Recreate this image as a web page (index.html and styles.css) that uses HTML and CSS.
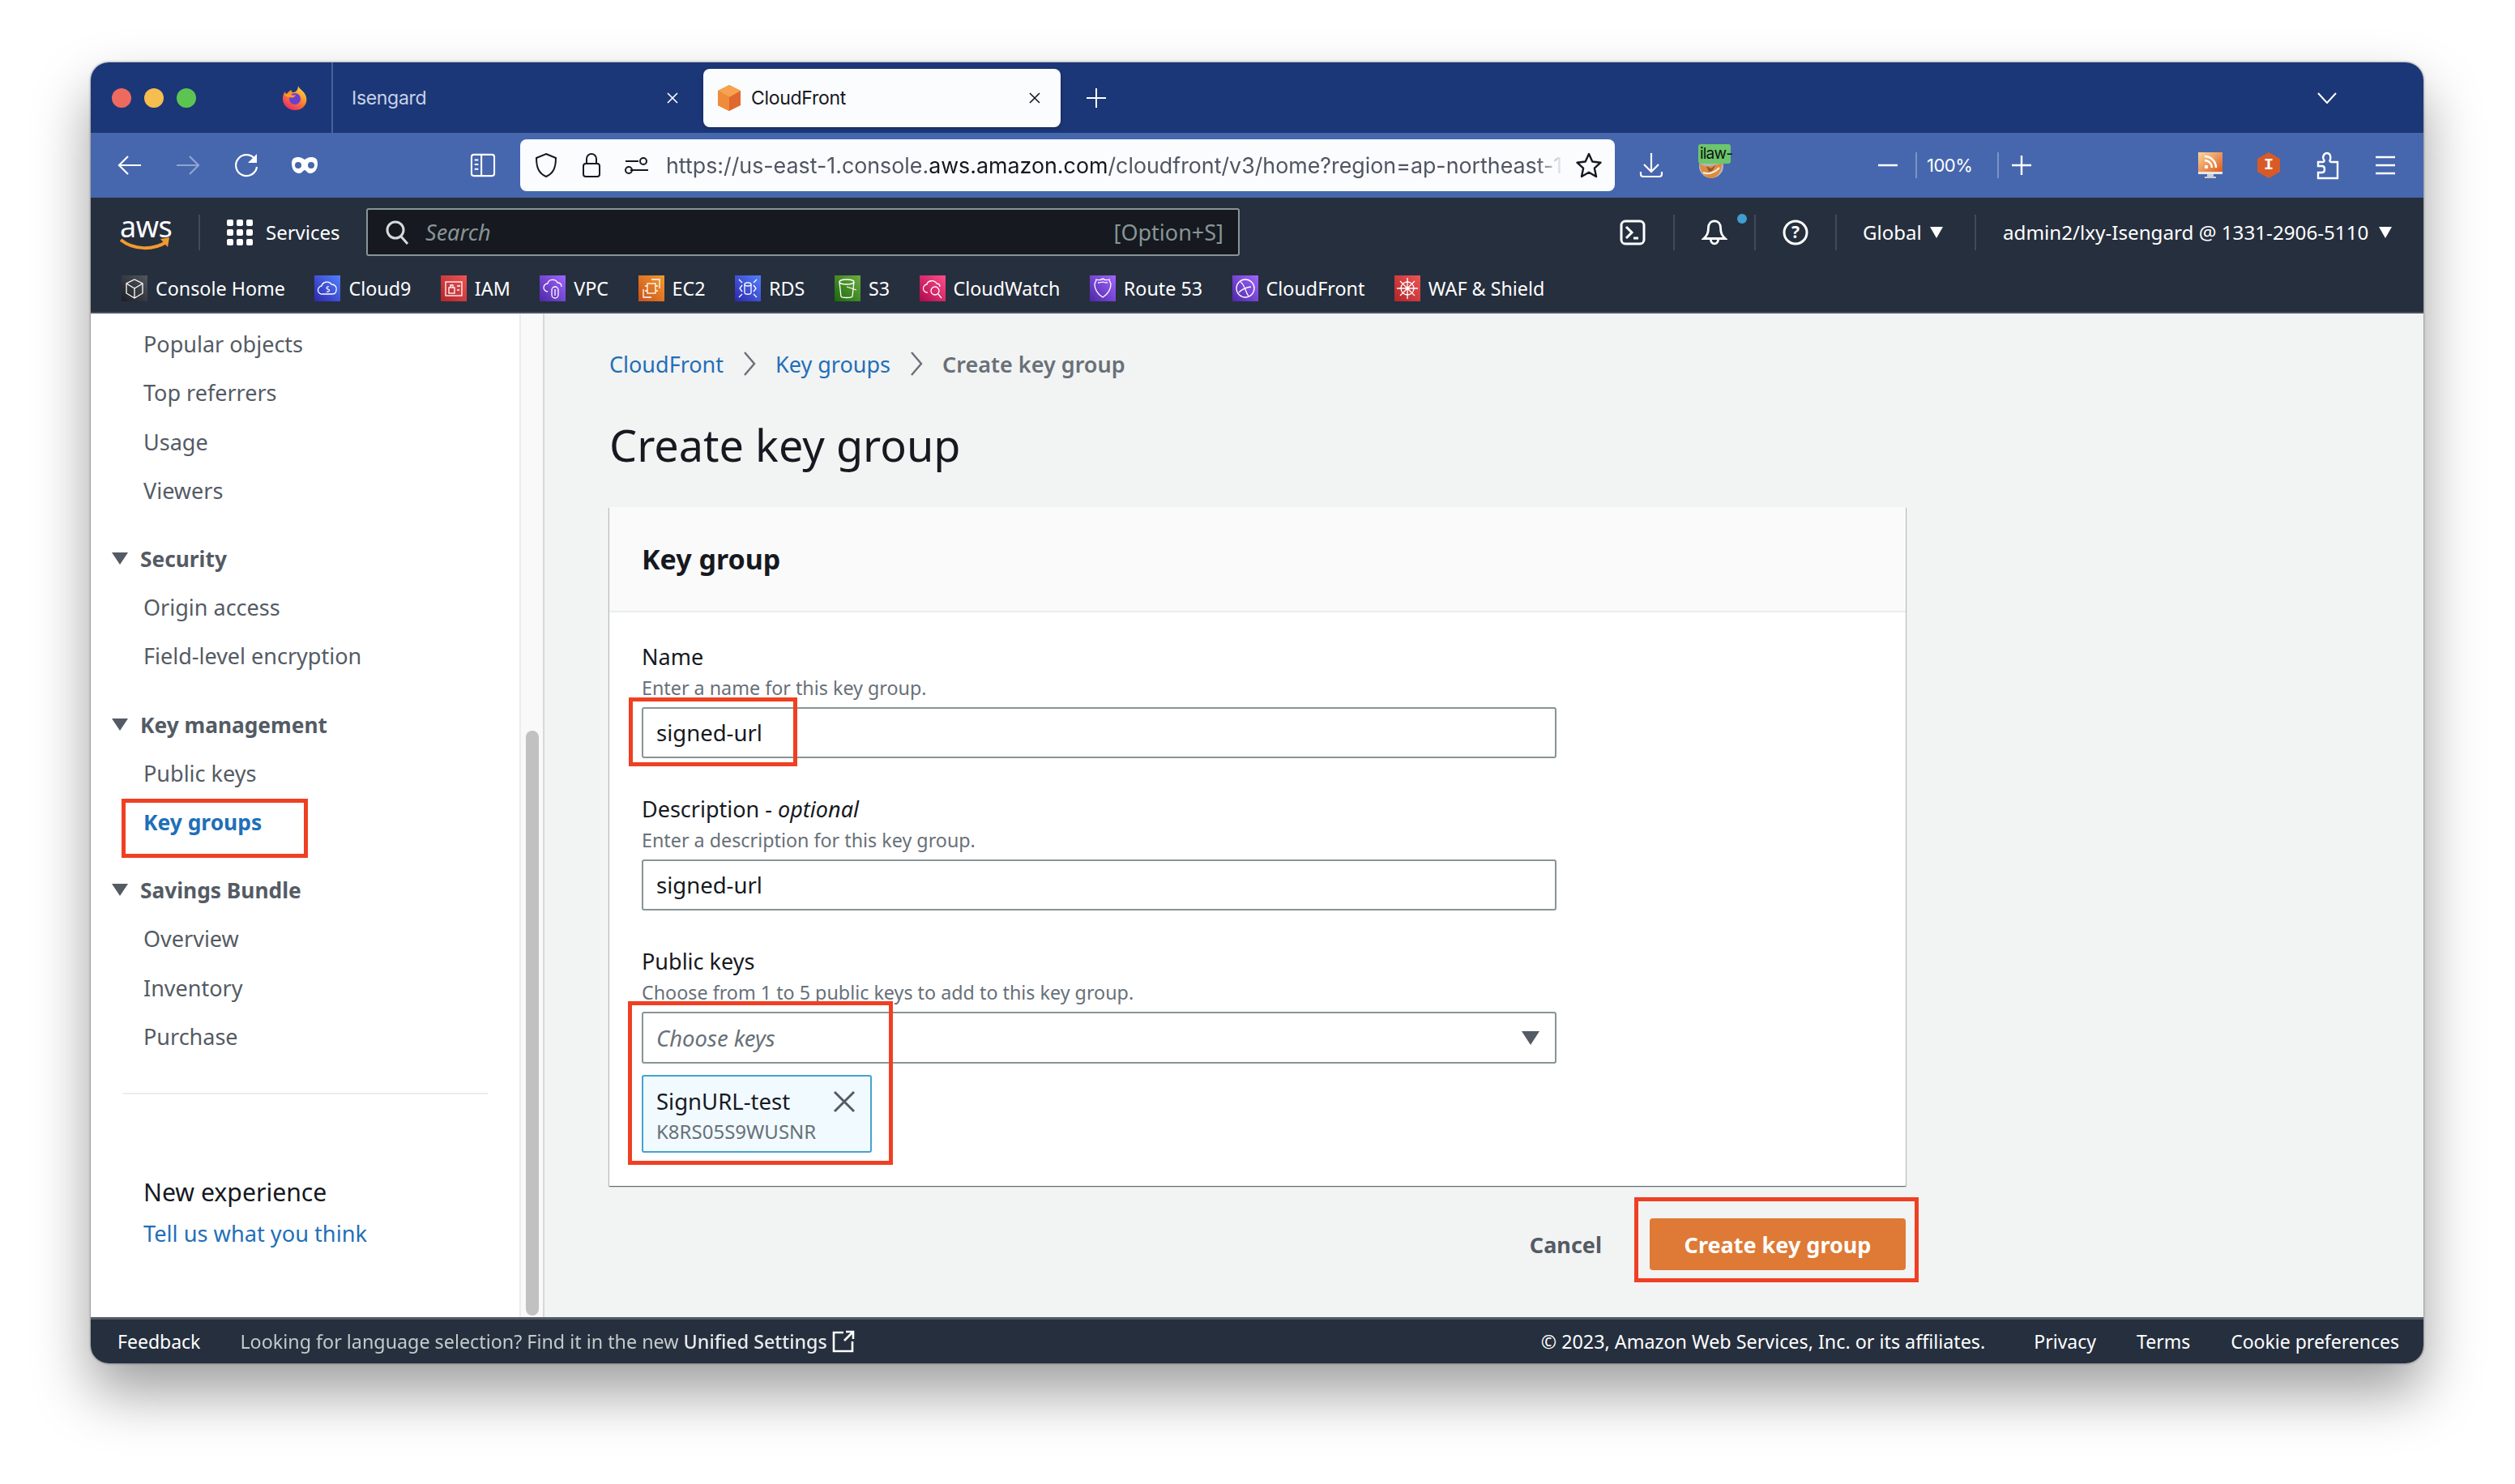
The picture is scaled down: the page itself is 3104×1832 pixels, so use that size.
FILE: index.html
```html
<!DOCTYPE html>
<html lang="en">
<head>
  <meta charset="UTF-8" />
  <title>CloudFront - Create key group</title>
  <link rel="stylesheet" href="styles.css">
</head>
<body>
<div class="window">
  <!-- browser tabs -->
  <div class="tabbar">
    <div class="lights"><i class="red"></i><i class="yellow"></i><i class="green"></i></div>
    <svg class="fx" viewBox="0 0 32 32">
      <defs><linearGradient id="fxg" x1="0.8" y1="0" x2="0.2" y2="1"><stop offset="0" stop-color="#ffe14d"/><stop offset=".45" stop-color="#ff8a2b"/><stop offset="1" stop-color="#e5236b"/></linearGradient></defs>
      <path d="M20 1c1 3 3 4 6 7 4 4 5 9 4 13-2 7-8 10-14 10C8 31 1 25 1 17c0-4 1-7 3-9 0 2 1 3 2 3 1-2 3-4 6-5-1 2 0 3 2 3 3 0 6-3 6-8z" fill="url(#fxg)"/>
      <circle cx="16" cy="17" r="7" fill="#6a3fd0"/>
      <path d="M3 12c3-2 6-2 8 0 2 1 4 1 6 0-1 3-4 4-7 3-2 0-4 0-7-3z" fill="#ff9c2b"/>
    </svg>
    <div class="tab">
      <span class="tab-title">Isengard</span>
      <svg class="tab-x" viewBox="0 0 16 16"><path d="M2 2l12 12M14 2L2 14"/></svg>
    </div>
    <div class="tab active">
      <svg class="favicon" viewBox="0 0 32 32"><path d="M16 0l14 7v18l-14 7-14-7V7z" fill="#e0672f"/><path d="M16 0l14 7-14 8L2 7z" fill="#f6a24e"/><path d="M2 7l14 8v17L2 25z" fill="#f08b3c"/></svg>
      <span class="tab-title">CloudFront</span>
      <svg class="tab-x" viewBox="0 0 16 16"><path d="M2 2l12 12M14 2L2 14"/></svg>
    </div>
    <svg class="newtab" viewBox="0 0 24 24"><path d="M12 0v24M0 12h24"/></svg>
    <svg class="tablist" viewBox="0 0 24 14"><path d="M1 1l11 12L23 1"/></svg>
  </div>

  <!-- browser toolbar -->
  <div class="toolbar">
    <button class="tb first"><svg viewBox="0 0 32 32"><path d="M30 16H3M14 5L3 16l11 11"/></svg></button>
    <button class="tb dim"><svg viewBox="0 0 32 32"><path d="M2 16h27M18 5l11 11-11 11"/></svg></button>
    <button class="tb"><svg viewBox="0 0 32 32"><path d="M27 9a13 13 0 1 0 2 9"/><path class="fill" d="M29 2v11H18z"/></svg></button>
    <button class="tb mask"><svg viewBox="0 0 34 22"><path class="fill" fill-rule="evenodd" d="M9 1c3 0 5 1 8 3 3-2 5-3 8-3 5 0 8 2 8 8 0 7-4 12-9 12-4 0-5-4-7-4s-3 4-7 4c-5 0-9-5-9-12C1 3 4 1 9 1zm0 6a4 4 0 1 0 0 8 4 4 0 0 0 0-8zm16 0a4 4 0 1 0 0 8 4 4 0 0 0 0-8z"/></svg></button>
    <button class="tb panel"><svg viewBox="0 0 32 32"><rect x="1" y="2" width="30" height="28" rx="3"/><path d="M14 2v28M5 9h5M5 15h5M5 21h5"/></svg></button>
    <div class="urlbar">
      <svg class="ub-icon" viewBox="0 0 32 32"><path d="M16 2l12 5c0 12-3 19-12 23C7 26 4 19 4 7z"/></svg>
      <svg class="ub-icon" viewBox="0 0 32 32"><rect x="6" y="14" width="20" height="16" rx="3"/><path d="M10 14V8a6 6 0 0 1 12 0v6"/></svg>
      <svg class="ub-icon" viewBox="0 0 32 32"><path d="M2 11h16M8 22h22"/><circle cx="24" cy="11" r="4"/><circle cx="6" cy="22" r="4"/></svg>
      <div class="url"><span>https://us-east-1.console.</span><b>aws.amazon.com</b><span>/cloudfront/v3/home?region=ap-northeast-1</span></div>
      <svg class="ub-star" viewBox="0 0 32 32"><path d="M16 2l4.300 9.500 10.200 1.200-7.600 7 2.100 10.300L16 24.800 7 30l2.100-10.300-7.600-7 10.200-1.200z"/></svg>
    </div>
    <button class="tb dl"><svg viewBox="0 0 32 32"><path d="M16 1v22M7 15l9 9 9-9M3 24v3a3 3 0 0 0 3 3h20a3 3 0 0 0 3-3v-3"/></svg></button>
    <div class="ilaw">
      <svg class="ilaw-fox" viewBox="0 0 30 30"><circle cx="15" cy="15" r="15" fill="#b5b5b5"/><path d="M1 12c4 3 9 4 14 3s10-2 13-4c1 9-6 19-13 19S1 22 1 12z" fill="#e08a3c"/><path d="M9 15l6 3 6-5-5 8-4 1z" fill="#8a5a2c"/><path d="M5 23c7 3 14 0 20-6" stroke="#eee" stroke-width="2" fill="none"/></svg>
      <span class="ilaw-tag">ilaw-</span>
    </div>
    <div class="zoomctl">
      <svg class="zm zm-minus" viewBox="0 0 24 24"><path d="M0 12h24"/></svg>
      <span class="zm-sep"></span>
      <span class="zm-val">100%</span>
      <span class="zm-sep"></span>
      <svg class="zm zm-plus" viewBox="0 0 24 24"><path d="M12 0v24M0 12h24"/></svg>
    </div>
    <svg class="rss" viewBox="0 0 32 32"><defs><linearGradient id="rssg" x1="0" y1="0" x2="1" y2="1"><stop offset="0" stop-color="#fbd79c"/><stop offset="1" stop-color="#dd5a1e"/></linearGradient></defs><rect x="1" y="0" width="30" height="24" fill="url(#rssg)"/><path d="M1 24h30v3H1z" fill="#e6e6e6"/><path d="M12 27h8v3h3v2H9v-2h3z" fill="#cfcfcf"/><circle cx="11" cy="18" r="2.200" fill="#fff"/><path d="M9 10a9 9 0 0 1 9 9M9 5a14 14 0 0 1 14 14" fill="none" stroke="#fff" stroke-width="2.500"/></svg>
    <div class="hex"><span>I</span></div>
    <svg class="tool puzzle" viewBox="0 0 28 36"><path d="M2 14h6c2 0 2-2 1-3-2-3 0-8 4-8s5 5 4 8c-1 1-1 3 1 3h8v20H2v-7h5c4 0 4-8 0-8H2z"/></svg>
    <svg class="tool burger" viewBox="0 0 26 24"><path d="M1 2h24M1 12h24M1 22h24"/></svg>
  </div>

  <!-- aws console nav -->
  <nav class="awsnav">
    <div class="nav-top">
      <div class="aws-logo">
        <span>aws</span>
        <svg viewBox="0 0 62 20"><path d="M1 4c16 13 40 13 56 3" fill="none" stroke="#f29a2e" stroke-width="4"/><path d="M50 3l11-2-2 12z" fill="#f29a2e"/></svg>
      </div>
      <span class="nav-sep logo-sep"></span>
      <svg class="grid-icon" viewBox="0 0 32 32"><g fill="#fff"><rect x="0" y="0" width="8" height="8" rx="2"/><rect x="12" y="0" width="8" height="8" rx="2"/><rect x="24" y="0" width="8" height="8" rx="2"/><rect x="0" y="12" width="8" height="8" rx="2"/><rect x="12" y="12" width="8" height="8" rx="2"/><rect x="24" y="12" width="8" height="8" rx="2"/><rect x="0" y="24" width="8" height="8" rx="2"/><rect x="12" y="24" width="8" height="8" rx="2"/><rect x="24" y="24" width="8" height="8" rx="2"/></g></svg>
      <span class="services">Services</span>
      <div class="searchbox">
        <svg viewBox="0 0 30 32"><circle cx="13" cy="13" r="10"/><path d="M20 21l8 9"/></svg>
        <span class="search-ph">Search</span>
        <span class="search-key">[Option+S]</span>
      </div>
      <div class="nav-slot shell">
        <svg viewBox="0 0 32 32"><rect x="2" y="2" width="28" height="28" rx="5"/><path d="M8 9l7 7-7 7M17 23h6"/></svg>
      </div>
      <div class="nav-slot bell">
        <svg viewBox="0 0 32 34"><path d="M16 2c-5 0-8 4-8 9 0 7-2 10-6 14h28c-4-4-6-7-6-14 0-5-3-9-8-9zM11 25c0 9 10 9 10 0"/></svg>
        <i class="bell-dot"></i>
      </div>
      <div class="nav-slot help">
        <svg viewBox="0 0 32 32"><circle cx="16" cy="16" r="14"/><text x="16" y="23" text-anchor="middle">?</text></svg>
      </div>
      <div class="nav-slot region"><span>Global</span><i class="caret"></i></div>
      <div class="nav-slot account"><span>admin2/lxy-Isengard @ 1331-2906-5110</span><i class="caret"></i></div>
    </div>
    <div class="nav-links">
      <a class="bm"><span class="svc c-home"><svg viewBox="0 0 32 32"><path d="M16 5l10 5v12l-10 6-10-6V10zM6 10l10 6 10-6M16 16v12"/></svg></span>Console Home</a>
      <a class="bm"><span class="svc c-blue"><svg viewBox="0 0 32 32"><path d="M10 23a5 5 0 0 1-1-10c1-5 9-7 12-2 4 0 7 3 6 7 0 3-2 5-5 5z"/><path d="M18 14c-3-1-4 3-1 3 3 1 1 4-2 3"/></svg></span>Cloud9</a>
      <a class="bm"><span class="svc c-red"><svg viewBox="0 0 32 32"><rect x="6" y="8" width="20" height="17"/><rect x="10" y="15" width="7" height="7"/><path d="M12 15v-3h3v3M20 13h4M20 18h3"/></svg></span>IAM</a>
      <a class="bm"><span class="svc c-purple"><svg viewBox="0 0 32 32"><path d="M10 20a5 5 0 0 1 0-10c1-6 10-6 12-1 3 0 5 2 5 5"/><rect x="15" y="14" width="8" height="14" rx="4"/><path d="M19 17v8"/></svg></span>VPC</a>
      <a class="bm"><span class="svc c-orange"><svg viewBox="0 0 32 32"><path d="M16 5h10v11M6 17v10h10"/><rect x="11" y="10" width="10" height="12"/><path d="M8 13h3M8 19h3M21 13h3M21 19h3"/></svg></span>EC2</a>
      <a class="bm"><span class="svc c-blue"><svg viewBox="0 0 32 32"><ellipse cx="16" cy="11" rx="4" ry="2"/><path d="M12 11v10c0 3 8 3 8 0V11M9 12l-3 4 3 4M23 12l3 4-3 4M5 5l4 4M27 5l-4 4M5 27l4-4M27 27l-4-4"/></svg></span>RDS</a>
      <a class="bm"><span class="svc c-green"><svg viewBox="0 0 32 32"><ellipse cx="15" cy="8" rx="9" ry="3"/><path d="M6 8l2 18c1 2 13 2 14 0l2-18M15 14l12 4"/></svg></span>S3</a>
      <a class="bm"><span class="svc c-pink"><svg viewBox="0 0 32 32"><path d="M10 21a5 5 0 0 1-1-10c1-5 9-6 12-1 2 0 4 1 4 4"/><circle cx="19" cy="19" r="5"/><path d="M23 23l4 5"/></svg></span>CloudWatch</a>
      <a class="bm"><span class="svc c-purple"><svg viewBox="0 0 32 32"><path d="M16 4c2 2 5 2 8 1 0 3 2 4 2 6 0 5-3 12-10 16C9 23 6 16 6 11c0-2 2-3 2-6 3 1 6 1 8-1z"/><path d="M10 9c2 0 4 0 6-1 2 1 4 1 6 1"/></svg></span>Route 53</a>
      <a class="bm"><span class="svc c-purple"><svg viewBox="0 0 32 32"><circle cx="16" cy="16" r="11"/><path d="M10 8c5 3 6 12 10 18M8 21c3-3 8-6 15-7"/></svg></span>CloudFront</a>
      <a class="bm"><span class="svc c-red"><svg viewBox="0 0 32 32"><circle cx="16" cy="16" r="8"/><path d="M16 3v26M3 16h26M7 7l18 18M25 7L7 25"/></svg></span>WAF &amp; Shield</a>
    </div>
  </nav>

  <div class="main">
    <aside class="sidebar">
      <a class="side-item">Popular objects</a>
      <a class="side-item">Top referrers</a>
      <a class="side-item">Usage</a>
      <a class="side-item">Viewers</a>
      <div class="side-head"><i class="side-caret"></i>Security</div>
      <a class="side-item">Origin access</a>
      <a class="side-item">Field-level encryption</a>
      <div class="side-head"><i class="side-caret"></i>Key management</div>
      <a class="side-item">Public keys</a>
      <a class="side-item current">Key groups</a>
      <div class="side-head"><i class="side-caret"></i>Savings Bundle</div>
      <a class="side-item">Overview</a>
      <a class="side-item">Inventory</a>
      <a class="side-item">Purchase</a>
      <hr class="side-rule" />
      <div class="side-new">New experience</div>
      <a class="side-tell">Tell us what you think</a>
    </aside>
    <div class="side-scroll"><div class="side-thumb"></div></div>

    <main class="content">
      <div class="crumbs">
        <a>CloudFront</a>
        <svg viewBox="0 0 16 32"><path d="M2 2l12 14L2 30"/></svg>
        <a>Key groups</a>
        <svg viewBox="0 0 16 32"><path d="M2 2l12 14L2 30"/></svg>
        <span>Create key group</span>
      </div>
      <h1>Create key group</h1>
      <section class="card">
        <h2 class="card-head">Key group</h2>
        <div class="card-body">
          <div class="field">
            <div class="f-label">Name</div>
            <div class="f-hint">Enter a name for this key group.</div>
            <div class="f-input">signed-url</div>
          </div>
          <div class="field">
            <div class="f-label">Description - <em>optional</em></div>
            <div class="f-hint">Enter a description for this key group.</div>
            <div class="f-input">signed-url</div>
          </div>
          <div class="field last">
            <div class="f-label">Public keys</div>
            <div class="f-hint">Choose from 1 to 5 public keys to add to this key group.</div>
            <div class="f-input f-select"><em>Choose keys</em><i class="sel-caret"></i></div>
            <div class="token">
              <div class="tok-name">SignURL-test</div>
              <div class="tok-id">K8RS05S9WUSNR</div>
              <svg viewBox="0 0 28 28"><path d="M2 2l24 24M26 2L2 26"/></svg>
            </div>
          </div>
        </div>
      </section>
      <div class="actions">
        <a class="cancel">Cancel</a>
        <button class="primary">Create key group</button>
      </div>
    </main>
  </div>

  <footer class="footer">
    <a class="fb">Feedback</a>
    <span class="lang">Looking for language selection? Find it in the new <b>Unified Settings</b></span>
    <svg class="ext" viewBox="0 0 28 28"><path d="M14 3H2v23h23V14M15 13L26 2M17 2h9v9"/></svg>
    <span class="copy">© 2023, Amazon Web Services, Inc. or its affiliates.</span>
    <a class="flink privacy">Privacy</a>
    <a class="flink">Terms</a>
    <a class="flink">Cookie preferences</a>
  </footer>

  <!-- red annotation boxes -->
  <div class="mark m-side"></div>
  <div class="mark m-name"></div>
  <div class="mark m-keys"></div>
  <div class="mark m-btn"></div>
</div>
</body>
</html>
```

FILE: styles.css
```css
* { box-sizing: border-box; }
html, body { margin: 0; height: 100%; }
body {
  background: #fff;
  padding: 77px 112px 0 112px;
  overflow: hidden;
  font-family: "Noto Sans", sans-serif;
  color: #16191f;
}
button { border: 0; background: none; padding: 0; font: inherit; }
svg { display: block; }

.window {
  position: relative;
  width: 2879px;
  height: 1606px;
  display: flex;
  flex-direction: column;
  border-radius: 22px;
  overflow: hidden;
}
/* shadow lives on a pseudo so the overflow clip keeps corners */
body::before {
  content: "";
  position: absolute;
  left: 112px;
  top: 77px;
  width: 2879px;
  height: 1606px;
  border-radius: 22px;
  box-shadow: 0 36px 70px rgba(0,0,0,.38), 0 0 3px rgba(0,0,0,.55);
}

/* tabs */
.tabbar {
  height: 87px;
  flex: none;
  background: #1c3778;
  display: flex;
  align-items: center;
  font-family: Inter, sans-serif;
}
.lights { display: flex; gap: 16px; margin-left: 26px; }
.lights i { width: 24px; height: 24px; border-radius: 50%; display: block; }
.lights .red { background: #ef6a5e; }
.lights .yellow { background: #f6bd4f; }
.lights .green { background: #5cc552; }
.fx { width: 32px; height: 32px; margin-left: 106px; }
.tab {
  height: 87px;
  width: 459px;
  margin-left: 29px;
  border-left: 2px solid #4a6199;
  padding-left: 23px;
  display: flex;
  align-items: center;
  color: #c9d2e6;
}
.tab-title { font-size: 23px; flex: 1; letter-spacing: -.3px; }
.tab-x { width: 16px; height: 16px; fill: none; stroke: #fff; stroke-width: 1.6; margin-right: 30px; }
.tab.active {
  height: 72px;
  width: 441px;
  margin-left: 0;
  border-left: 0;
  background: #fbfcfe;
  color: #16191f;
  border-radius: 8px;
  padding-left: 16px;
  box-shadow: 0 1px 4px rgba(0,0,0,.3);
}
.tab.active .tab-x { stroke: #16191f; margin-right: 24px; }
.favicon { width: 32px; height: 32px; margin-right: 11px; }
.newtab { width: 24px; height: 24px; margin-left: 32px; fill: none; stroke: #fff; stroke-width: 2; }
.tablist { width: 24px; height: 14px; margin-left: auto; margin-right: 107px; fill: none; stroke: #fff; stroke-width: 2; }

/* toolbar */
.toolbar {
  height: 80px;
  flex: none;
  background: #4667ae;
  display: flex;
  align-items: center;
  font-family: Inter, sans-serif;
  color: #fff;
}
.tb { width: 72px; height: 48px; display: flex; align-items: center; justify-content: center; flex: none; }
.tb.first { margin-left: 12px; }
.tb svg { width: 32px; height: 32px; fill: none; stroke: #fff; stroke-width: 2.200; }
.tb .fill { fill: #fff; stroke: none; }
.tb.dim svg { opacity: .4; }
.tb.mask svg { width: 34px; height: 22px; stroke: none; }
.tb.panel { margin-left: 148px; }
.tb.panel svg { width: 32px; height: 30px; }
.urlbar {
  width: 1351px;
  height: 64px;
  margin-left: 10px;
  background: #fbfcfe;
  border-radius: 8px;
  display: flex;
  align-items: center;
  padding-left: 16px;
  flex: none;
}
.ub-icon { width: 32px; height: 32px; margin-right: 24px; fill: none; stroke: #16191f; stroke-width: 2; }
.url {
  font-size: 26.8px;
  color: #4f5663;
  white-space: nowrap;
  width: 1108px;
  margin-left: -4px;
  -webkit-mask-image: linear-gradient(to right, #000 97%, transparent);
  mask-image: linear-gradient(to right, #000 97%, transparent);
}
.url b { font-weight: 400; color: #14171c; }
.ub-star { width: 32px; height: 32px; margin-left: 15px; fill: none; stroke: #16191f; stroke-width: 2.400; stroke-linejoin: round; }
.tb.dl { margin-left: 13px; width: 64px; }
.ilaw { position: relative; width: 40px; height: 60px; margin-left: 26px; margin-top: -8px; }
.ilaw-fox { position: absolute; left: 1px; top: 20px; width: 30px; height: 30px; }
.ilaw-tag {
  position: absolute;
  left: 0;
  top: 8px;
  width: 40px;
  height: 24px;
  background: #6cc66b;
  color: #111;
  font-size: 19px;
  letter-spacing: -.8px;
  line-height: 24px;
  padding-left: 2px;
  border-radius: 3px;
}
.zoomctl { display: flex; align-items: center; margin-left: 182px; }
.zm { width: 24px; height: 24px; fill: none; stroke: #fff; stroke-width: 2.400; }
.zm-minus { margin-right: 22px; }
.zm-plus { margin-left: 16px; }
.zm-sep { width: 2px; height: 32px; background: #7b94c7; }
.zm-val { font-size: 22px; width: 59px; margin: 0 28px 0 12px; letter-spacing: -.5px; }
.rss { width: 32px; height: 32px; margin-left: 205px; }
.hex {
  width: 28px;
  height: 32px;
  margin-left: 42px;
  background: #d85a26;
  clip-path: polygon(50% 0, 100% 25%, 100% 75%, 50% 100%, 0 75%, 0 25%);
  color: #fff;
  font-family: "Liberation Mono", monospace;
  font-weight: 700;
  font-size: 20px;
  line-height: 32px;
  text-align: center;
}
.tool { fill: none; stroke: #fff; stroke-width: 2.400; }
.puzzle { width: 28px; height: 36px; margin-left: 45px; }
.burger { width: 26px; height: 24px; margin-left: 44px; }

/* aws nav */
.awsnav {
  height: 143px;
  flex: none;
  background: #262f3e;
  border-bottom: 2px solid #4b5360;
  color: #fff;
  padding-top: 13px;
}
.nav-top { display: flex; align-items: center; height: 59px; }
.aws-logo { width: 62px; margin-left: 36px; position: relative; height: 44px; }
.aws-logo span { display: block; font-size: 36px; line-height: 30px; text-align: center; letter-spacing: -.5px; }
.aws-logo svg { width: 62px; height: 20px; margin-top: -3px; }
.nav-sep { width: 2px; height: 44px; background: #414a58; }
.logo-sep { margin-left: 35px; }
.grid-icon { width: 32px; height: 32px; margin-left: 33px; }
.services { font-size: 24px; margin-left: 16px; width: 90px; white-space: nowrap; }
.searchbox {
  width: 1078px;
  height: 59px;
  margin-left: 34px;
  background: #16191f;
  border: 2px solid #879596;
  border-radius: 3px;
  display: flex;
  align-items: center;
  padding: 0 18px 0 21px;
  color: #879596;
  font-size: 27px;
}
.searchbox svg { width: 30px; height: 32px; fill: none; stroke: #d5dbdb; stroke-width: 3; }
.search-ph { font-style: italic; margin-left: 20px; flex: 1; }
.nav-slot {
  height: 44px;
  display: flex;
  align-items: center;
  justify-content: center;
  width: 100px;
  position: relative;
  flex: none;
}
.nav-slot + .nav-slot { border-left: 2px solid #414a58; }
.nav-slot svg { width: 32px; height: 32px; fill: none; stroke: #fff; stroke-width: 3; }
.shell { margin-left: 435px; }
.help text { fill: #fff; stroke: none; font-size: 21px; font-weight: 700; font-family: "Noto Sans", sans-serif; }
.bell-dot { position: absolute; right: 9px; top: -1px; width: 12px; height: 12px; background: #3f9fd0; border-radius: 50%; }
.region, .account { justify-content: flex-start; padding-left: 33px; font-size: 24.200px; white-space: nowrap; }
.region { width: 172px; padding-left: 32px; font-size: 24px; }
.region .caret { margin-left: 10px; }
.account { width: 520px; }
.caret { width: 0; height: 0; border-left: 8px solid transparent; border-right: 8px solid transparent; border-top: 14px solid #fff; margin-left: 13px; }

.nav-links { display: flex; align-items: center; margin-top: 24px; padding-left: 38px; gap: 36.500px; }
.bm { display: flex; align-items: center; gap: 10px; font-size: 23.300px; height: 32px; white-space: nowrap; }
.svc { width: 32px; height: 32px; display: block; flex: none; }
.svc svg { width: 32px; height: 32px; fill: none; stroke: #fff; stroke-width: 1.300; }
.c-home { background: linear-gradient(45deg, #1c1f24, #52575e); }
.c-blue { background: linear-gradient(45deg, #2e27ad, #527fff); }
.c-red { background: linear-gradient(45deg, #b0252a, #ee5455); }
.c-purple { background: linear-gradient(45deg, #4d27a8, #a166ff); }
.c-orange { background: linear-gradient(45deg, #c8511b, #f59a2e); }
.c-green { background: linear-gradient(45deg, #1b660f, #6cae3e); }
.c-pink { background: linear-gradient(45deg, #b0084d, #ff4f8b); }

/* page body */
.main { flex: 1; display: flex; min-height: 0; }
.sidebar {
  width: 531px;
  flex: none;
  background: #fff;
  border-right: 2px solid #eaeded;
  padding: 8px 0 0 65px;
  overflow: hidden;
  color: #545b64;
  font-size: 27px;
}
.side-item { display: block; height: 60.3px; line-height: 60px; }
.side-item.current { color: #1f6fb8; font-weight: 700; font-size: 26.400px; }
.side-head {
  height: 60px;
  line-height: 60px;
  font-weight: 700;
  font-size: 26.300px;
  margin: 24px 0 0 -4px;
  position: relative;
}
.side-caret {
  position: absolute;
  left: -35px;
  top: 22px;
  width: 0;
  height: 0;
  border-left: 10px solid transparent;
  border-right: 10px solid transparent;
  border-top: 15px solid #545b64;
}
.side-rule { border: 0; height: 2px; background: #eaeded; margin: 39px 0 0 -25px; width: 450px; }
.side-new { margin-top: 101px; font-size: 30.200px; line-height: 40px; color: #16191f; }
.side-tell { display: block; margin-top: 11px; line-height: 40px; color: #1f6fb8; font-size: 27.200px; }
.side-scroll { width: 29px; flex: none; background: #f9f9f9; border-right: 2px solid #d5dbdb; position: relative; }
.side-thumb { position: absolute; left: 6px; top: 515px; bottom: 2px; width: 16px; background: #c1c1c1; border-radius: 8px; }

.content { flex: 1; background: #f2f3f3; padding: 42px 0 0 80px; }
.crumbs { display: flex; align-items: center; height: 40px; font-size: 27px; color: #687078; }
.crumbs a { color: #1f6fb8; }
.crumbs span { font-weight: 600; }
.crumbs svg { width: 16px; height: 32px; margin: 0 24px; fill: none; stroke: #687078; stroke-width: 2.400; }
h1 { margin: 44px 0 0 0; font-size: 54px; font-weight: 400; line-height: 72px; color: #16191f; }

.card {
  width: 1600px;
  margin-top: 41px;
  background: #fff;
  box-shadow: 0 1px 1px rgba(0,28,36,.4), 1px 1px 1px rgba(0,28,36,.2), -1px 1px 1px rgba(0,28,36,.2);
}
.card-head {
  margin: 0;
  height: 130px;
  background: #fafafa;
  border-bottom: 2px solid #eaeded;
  padding-left: 40px;
  font-size: 34px;
  font-weight: 700;
  line-height: 128px;
}
.card-body { padding: 37px 0 41px 40px; }
.field { margin-bottom: 45px; }
.field.last { margin-bottom: 0; }
.f-label { font-size: 27px; line-height: 36px; }
.f-hint { font-size: 23.300px; line-height: 30px; margin-top: 5px; color: #687078; }
.f-input {
  width: 1129px;
  height: 63px;
  margin-top: 9px;
  border: 2px solid #879596;
  border-radius: 3px;
  background: #fff;
  padding-left: 16px;
  font-size: 27.500px;
  line-height: 59px;
}
.f-select { height: 64px; margin-top: 9px; display: flex; align-items: center; justify-content: space-between; padding-right: 19px; color: #687078; }
.sel-caret { width: 0; height: 0; border-left: 11px solid transparent; border-right: 11px solid transparent; border-top: 17px solid #545b64; }
.token {
  position: relative;
  width: 284px;
  height: 96px;
  margin-top: 14px;
  background: #f1faff;
  border: 2px solid #44a3cc;
  border-radius: 3px;
  padding: 13px 0 0 16px;
}
.tok-name { font-size: 27.500px; line-height: 36px; }
.tok-id { font-size: 24px; line-height: 32px; color: #687078; margin-top: 3px; }
.token svg { position: absolute; right: 18px; top: 17px; width: 28px; height: 28px; fill: none; stroke: #545b64; stroke-width: 3; }

.actions { width: 1600px; display: flex; justify-content: flex-end; align-items: center; margin-top: 40px; gap: 59px; }
.cancel { font-size: 27px; font-weight: 700; color: #545b64; }
.primary {
  width: 316px;
  height: 64px;
  background: #de7a35;
  border-radius: 4px;
  color: #fff;
  font-size: 27px;
  font-weight: 700;
}

/* footer */
.footer {
  height: 57px;
  flex: none;
  background: #252f3e;
  border-top: 3px solid #545b64;
  display: flex;
  align-items: center;
  padding: 0 30px 0 33px;
  color: #fff;
  font-size: 23px;
  white-space: nowrap;
}
.lang { margin-left: 49px; color: #d5dbdb; opacity: .9; font-size: 23.300px; }
.lang b { font-weight: 500; color: #fff; }
.ext { width: 28px; height: 28px; margin-left: 6px; fill: none; stroke: #fff; stroke-width: 2.600; }
.copy { margin-left: auto; font-size: 23.300px; }
.flink { margin-left: 50px; }
.flink.privacy { margin-left: 60px; }

/* annotations over the page */
.mark { position: absolute; border: 5px solid #ef4023; pointer-events: none; }
.m-side { left: 38px; top: 909px; width: 230px; height: 73px; }
.m-name { left: 664px; top: 784px; width: 208px; height: 85px; }
.m-keys { left: 663px; top: 1159px; width: 327px; height: 202px; }
.m-btn { left: 1905px; top: 1401px; width: 351px; height: 105px; }
```
